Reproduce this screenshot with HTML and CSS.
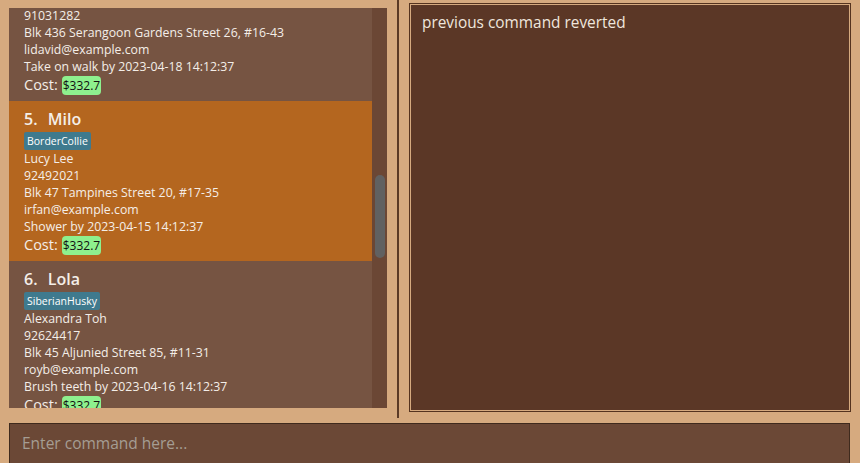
FILE: index.html
```html
<!DOCTYPE html>
<html>
<head>
<meta charset="utf-8">
<link rel="stylesheet" href="styles.css">
</head>
<body>
<div class="app">
  <div class="top">
    <div class="left">
      <div class="listview">
        <div class="viewport">
          <div class="list">
            <div class="card">
              <div class="title">4.&nbsp;&nbsp;Max</div>
              <div class="tags"><span class="tag">GoldenRetriever</span></div>
              <div class="line">David Li</div>
              <div class="line">91031282</div>
              <div class="line">Blk 436 Serangoon Gardens Street 26, #16-43</div>
              <div class="line">lidavid@example.com</div>
              <div class="line">Take on walk by 2023-04-18 14:12:37</div>
              <div class="cost">Cost: <span class="price">$332.7</span></div>
            </div>
            <div class="card selected">
              <div class="title">5.&nbsp;&nbsp;Milo</div>
              <div class="tags"><span class="tag">BorderCollie</span></div>
              <div class="line">Lucy Lee</div>
              <div class="line">92492021</div>
              <div class="line">Blk 47 Tampines Street 20, #17-35</div>
              <div class="line">irfan@example.com</div>
              <div class="line">Shower by 2023-04-15 14:12:37</div>
              <div class="cost">Cost: <span class="price">$332.7</span></div>
            </div>
            <div class="card">
              <div class="title">6.&nbsp;&nbsp;Lola</div>
              <div class="tags"><span class="tag">SiberianHusky</span></div>
              <div class="line">Alexandra Toh</div>
              <div class="line">92624417</div>
              <div class="line">Blk 45 Aljunied Street 85, #11-31</div>
              <div class="line">royb@example.com</div>
              <div class="line">Brush teeth by 2023-04-16 14:12:37</div>
              <div class="cost">Cost: <span class="price">$332.7</span></div>
            </div>
          </div>
        </div>
        <div class="scrollbar"><div class="thumb"></div></div>
      </div>
    </div>
    <div class="vdivider"></div>
    <div class="right">
      <div class="result">
        <div class="result-inner">previous command reverted</div>
      </div>
    </div>
  </div>
  <div class="hdivider"></div>
  <div class="bottom">
    <div class="command">Enter command here...</div>
  </div>
</div>
</body>
</html>
```
FILE: styles.css
```css
html, body {
  margin: 0;
  padding: 0;
}
body {
  background: #d6aa7f;
  width: 860px;
  height: 463px;
  overflow: hidden;
  font-family: "Open Sans", "Noto Sans", sans-serif;
}
.app {
  display: flex;
  flex-direction: column;
  height: 463px;
}
.top {
  display: flex;
  height: 418px;
}
.left {
  width: 388px;
  padding: 8px 0 10px 9px;
  box-sizing: border-box;
  height: 418px;
}
.listview {
  display: flex;
  height: 400px;
  width: 378px;
}
.viewport {
  width: 363px;
  height: 400px;
  overflow: hidden;
  background: #765442;
}
.list {
  margin-top: -67px;
}
.card {
  height: 160px;
  box-sizing: border-box;
  padding: 7px 0 6px 15px;
  background: #765442;
  color: #f4eee8;
}
.card.selected {
  background: #b4661f;
}
.title {
  font-size: 16px;
  font-weight: 600;
  line-height: 22px;
  word-spacing: 1px;
}
.tags {
  display: flex;
  margin-top: 2px;
  height: 18px;
}
.tag {
  background: #3f7a8e;
  color: #ffffff;
  font-size: 10.5px;
  line-height: 18px;
  padding: 0 3px;
  border-radius: 2px;
}
.line {
  font-size: 12.3px;
  line-height: 17px;
  white-space: nowrap;
}
.cost {
  font-size: 14.5px;
  line-height: 20px;
  display: flex;
  align-items: center;
  gap: 4px;
}
.price {
  background: #8ef08e;
  color: #111111;
  font-size: 12px;
  line-height: 19px;
  padding: 0 1px;
  border-radius: 4px;
}
.scrollbar {
  width: 15px;
  height: 400px;
  background: #6b4735;
  box-sizing: border-box;
  padding: 0 2px 0 3px;
}
.thumb {
  margin-top: 167px;
  height: 83px;
  background: #616161;
  border-radius: 5px;
}
.vdivider {
  width: 2px;
  height: 418px;
  background: #5b3a26;
  margin-left: 9px;
}
.right {
  padding: 3px 9px 0 10px;
}
.result {
  width: 442px;
  height: 409px;
  box-sizing: border-box;
  border: 1px solid #55331f;
  background: #d6aa7f;
  padding: 1px;
}
.result-inner {
  height: 100%;
  box-sizing: border-box;
  background: #5b3726;
  color: #efe6dd;
  font-size: 15.4px;
  line-height: 20px;
  padding: 8px 11px;
}
.hdivider {
  height: 2px;
  background: #5b3a26;
}
.bottom {
  padding: 5px 10px 0 9px;
}
.command {
  height: 42px;
  box-sizing: border-box;
  background: #6b4836;
  border: 1px solid #3f2a1d;
  color: #a59d93;
  font-size: 15.5px;
  line-height: 38px;
  padding: 0 12px;
}
```
